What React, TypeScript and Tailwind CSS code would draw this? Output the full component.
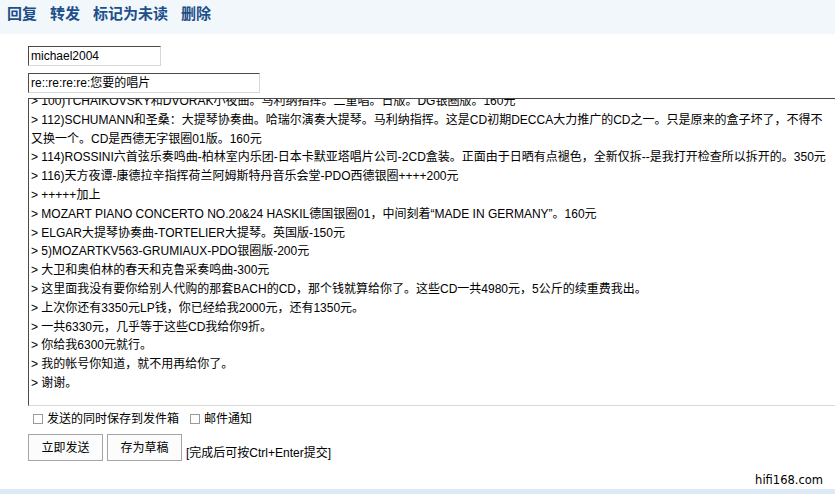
const lines = [
  "> 100)TCHAIKOVSKY和DVORAK小夜曲。马利纳指挥。二重唱。日版。DG银圈版。160元",
  "> 112)SCHUMANN和圣桑：大提琴协奏曲。哈瑞尔演奏大提琴。马利纳指挥。这是CD初期DECCA大力推广的CD之一。只是原来的盒子坏了，不得不",
  "又换一个。CD是西德无字银圈01版。160元",
  "> 114)ROSSINI六首弦乐奏鸣曲-柏林室内乐团-日本卡默亚塔唱片公司-2CD盒装。正面由于日晒有点褪色，全新仅拆--是我打开检查所以拆开的。350元",
  "> 116)天方夜谭-康德拉辛指挥荷兰阿姆斯特丹音乐会堂-PDO西德银圈++++200元",
  "> +++++加上",
  "> MOZART PIANO CONCERTO NO.20&24 HASKIL德国银圈01，中间刻着“MADE IN GERMANY”。160元",
  "> ELGAR大提琴协奏曲-TORTELIER大提琴。英国版-150元",
  "> 5)MOZARTKV563-GRUMIAUX-PDO银圈版-200元",
  "> 大卫和奥伯林的春天和克鲁采奏鸣曲-300元",
  "> 这里面我没有要你给别人代购的那套BACH的CD，那个钱就算给你了。这些CD一共4980元，5公斤的续重费我出。",
  "> 上次你还有3350元LP钱，你已经给我2000元，还有1350元。",
  "> 一共6330元，几乎等于这些CD我给你9折。",
  "> 你给我6300元就行。",
  "> 我的帐号你知道，就不用再给你了。",
  "> 谢谢。",
];

const inset =
  "border border-t-[#4a4a4a] border-l-[#4a4a4a] border-r-[#d8d8d8] border-b-[#d8d8d8] bg-white";

export default function App() {
  return (
    <div
      className="w-[835px] h-[494px] bg-white text-[12px] text-black flex flex-col overflow-hidden"
      style={{ fontFamily: '"Liberation Sans", Arial, "Noto Sans CJK SC", sans-serif' }}
    >
      <div className="h-[34px] bg-[#f2f7fc] flex items-start gap-[13px] pl-[7px] pt-[4px] text-[15px] leading-[20px] font-bold text-[#1d4f8a]">
        <span>回复</span>
        <span>转发</span>
        <span>标记为未读</span>
        <span>删除</span>
      </div>

      <div className="pl-[28px] pt-[12px] flex flex-col">
        <div className={`${inset} w-[133px] h-[20px] px-[2px] leading-[18px]`}>michael2004</div>
        <div className={`${inset} w-[232px] h-[20px] mt-[7px] px-[2px] leading-[18px]`}>
          re::re:re:re:您要的唱片
        </div>
        <div className={`${inset} border-r-0 mt-[5px] h-[308px] overflow-hidden pl-[2px]`}>
          <div className="-mt-[7px] leading-[18.8px] whitespace-nowrap">
            {lines.map((l, i) => (
              <div key={i}>{l}</div>
            ))}
          </div>
        </div>

        <div className="flex items-center mt-[7px] pl-[5px] h-[12px]">
          <span className="w-[10px] h-[10px] border border-[#9a9a9a] bg-white" />
          <span className="ml-[4px]">发送的同时保存到发件箱</span>
          <span className="ml-[11px] w-[10px] h-[10px] border border-[#9a9a9a] bg-white" />
          <span className="ml-[4px]">邮件通知</span>
        </div>

        <div className="flex items-end mt-[9px]">
          <button className="w-[75px] h-[27px] border border-[#a5a5a5] bg-[#fcfcfc] text-[12px]">
            立即发送
          </button>
          <button className="ml-[4px] w-[75px] h-[27px] border border-[#a5a5a5] bg-[#fcfcfc] text-[12px]">
            存为草稿
          </button>
          <span className="ml-[4px] leading-[14px] mb-[1px]">[完成后可按Ctrl+Enter提交]</span>
        </div>
      </div>

      <div className="flex-1 flex items-end justify-end pr-[12px]">
        <span className="text-[11.5px] leading-[18px]" style={{ fontFamily: '"DejaVu Sans", Tahoma, sans-serif' }}>
          hifi168.com
        </span>
      </div>
      <div className="h-[5px] bg-[#dce9f7]" />
    </div>
  );
}
